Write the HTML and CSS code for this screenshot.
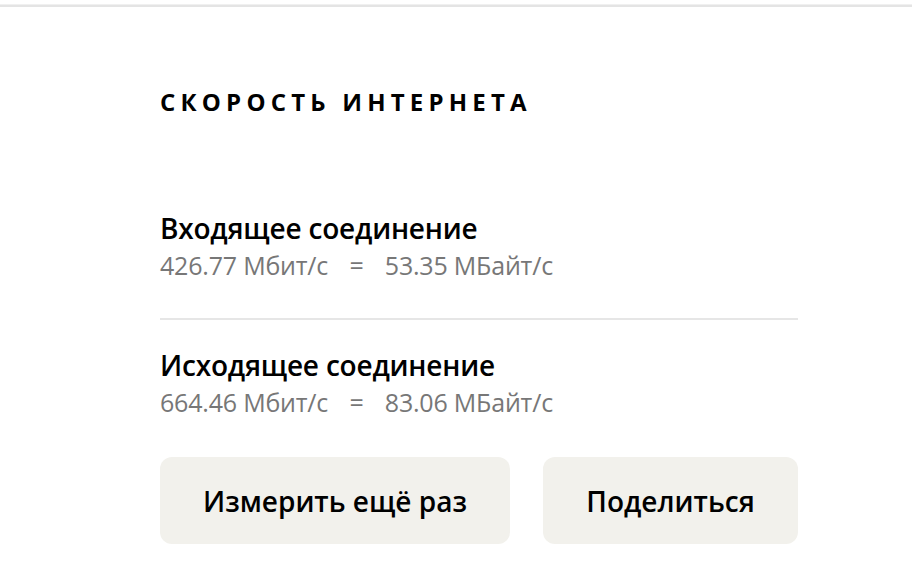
FILE: index.html
```html
<!DOCTYPE html>
<html lang="ru">
<head>
    <meta charset="UTF-8">
    <meta name="viewport" content="width=device-width, initial-scale=1.0">
    <title>Скорость интернета</title>
    <link rel="stylesheet" href="styles.css">
</head>
<body>
    <div class="topline"></div>
    <div class="panel">
        <h2 class="heading">Скорость интернета</h2>

        <div class="result result-first">
            <div class="result-title">Входящее соединение</div>
            <div class="result-value">
                <span>426.77 Мбит/с</span>
                <span class="eq">=</span>
                <span>53.35 МБайт/с</span>
            </div>
        </div>

        <div class="divider"></div>

        <div class="result">
            <div class="result-title">Исходящее соединение</div>
            <div class="result-value">
                <span>664.46 Мбит/с</span>
                <span class="eq">=</span>
                <span>83.06 МБайт/с</span>
            </div>
        </div>

        <div class="buttons">
            <button class="btn btn-wide">Измерить ещё раз</button>
            <button class="btn">Поделиться</button>
        </div>
    </div>
</body>
</html>
```

FILE: styles.css
```css
body {
    font-family: "Open Sans", Arial, sans-serif;
    background-color: #fff;
    margin: 0;
    color: #000;
}

.topline {
    height: 2px;
    margin-top: 4px;
    background-color: #e4e4e4;
    border-top: 1px solid #f0f0f0;
}

.panel {
    width: 638px;
    margin-left: 160px;
}

.heading {
    margin: 80px 0 0;
    font-size: 24px;
    font-weight: 700;
    letter-spacing: 5.2px;
    text-transform: uppercase;
    line-height: 30px;
    white-space: nowrap;
}

.result {
    margin-top: 28px;
}

.result-first {
    margin-top: 94px;
}

.result-title {
    font-size: 28px;
    font-weight: 600;
    line-height: 34px;
    letter-spacing: -0.2px;
}

.result-value {
    margin-top: 5px;
    font-size: 25px;
    color: #777;
    line-height: 30px;
    letter-spacing: -0.2px;
}

.eq {
    margin: 0 15px;
}

.divider {
    height: 2px;
    background-color: #e6e6e6;
    margin-top: 38px;
}

.buttons {
    display: flex;
    gap: 33px;
    margin-top: 40px;
}

.btn {
    height: 87px;
    border: none;
    border-radius: 12px;
    background-color: #f2f1ec;
    font-family: inherit;
    font-size: 28px;
    font-weight: 600;
    color: #000;
    cursor: pointer;
    flex: 1;
}

.btn-wide {
    flex: 0 0 350px;
}
```
